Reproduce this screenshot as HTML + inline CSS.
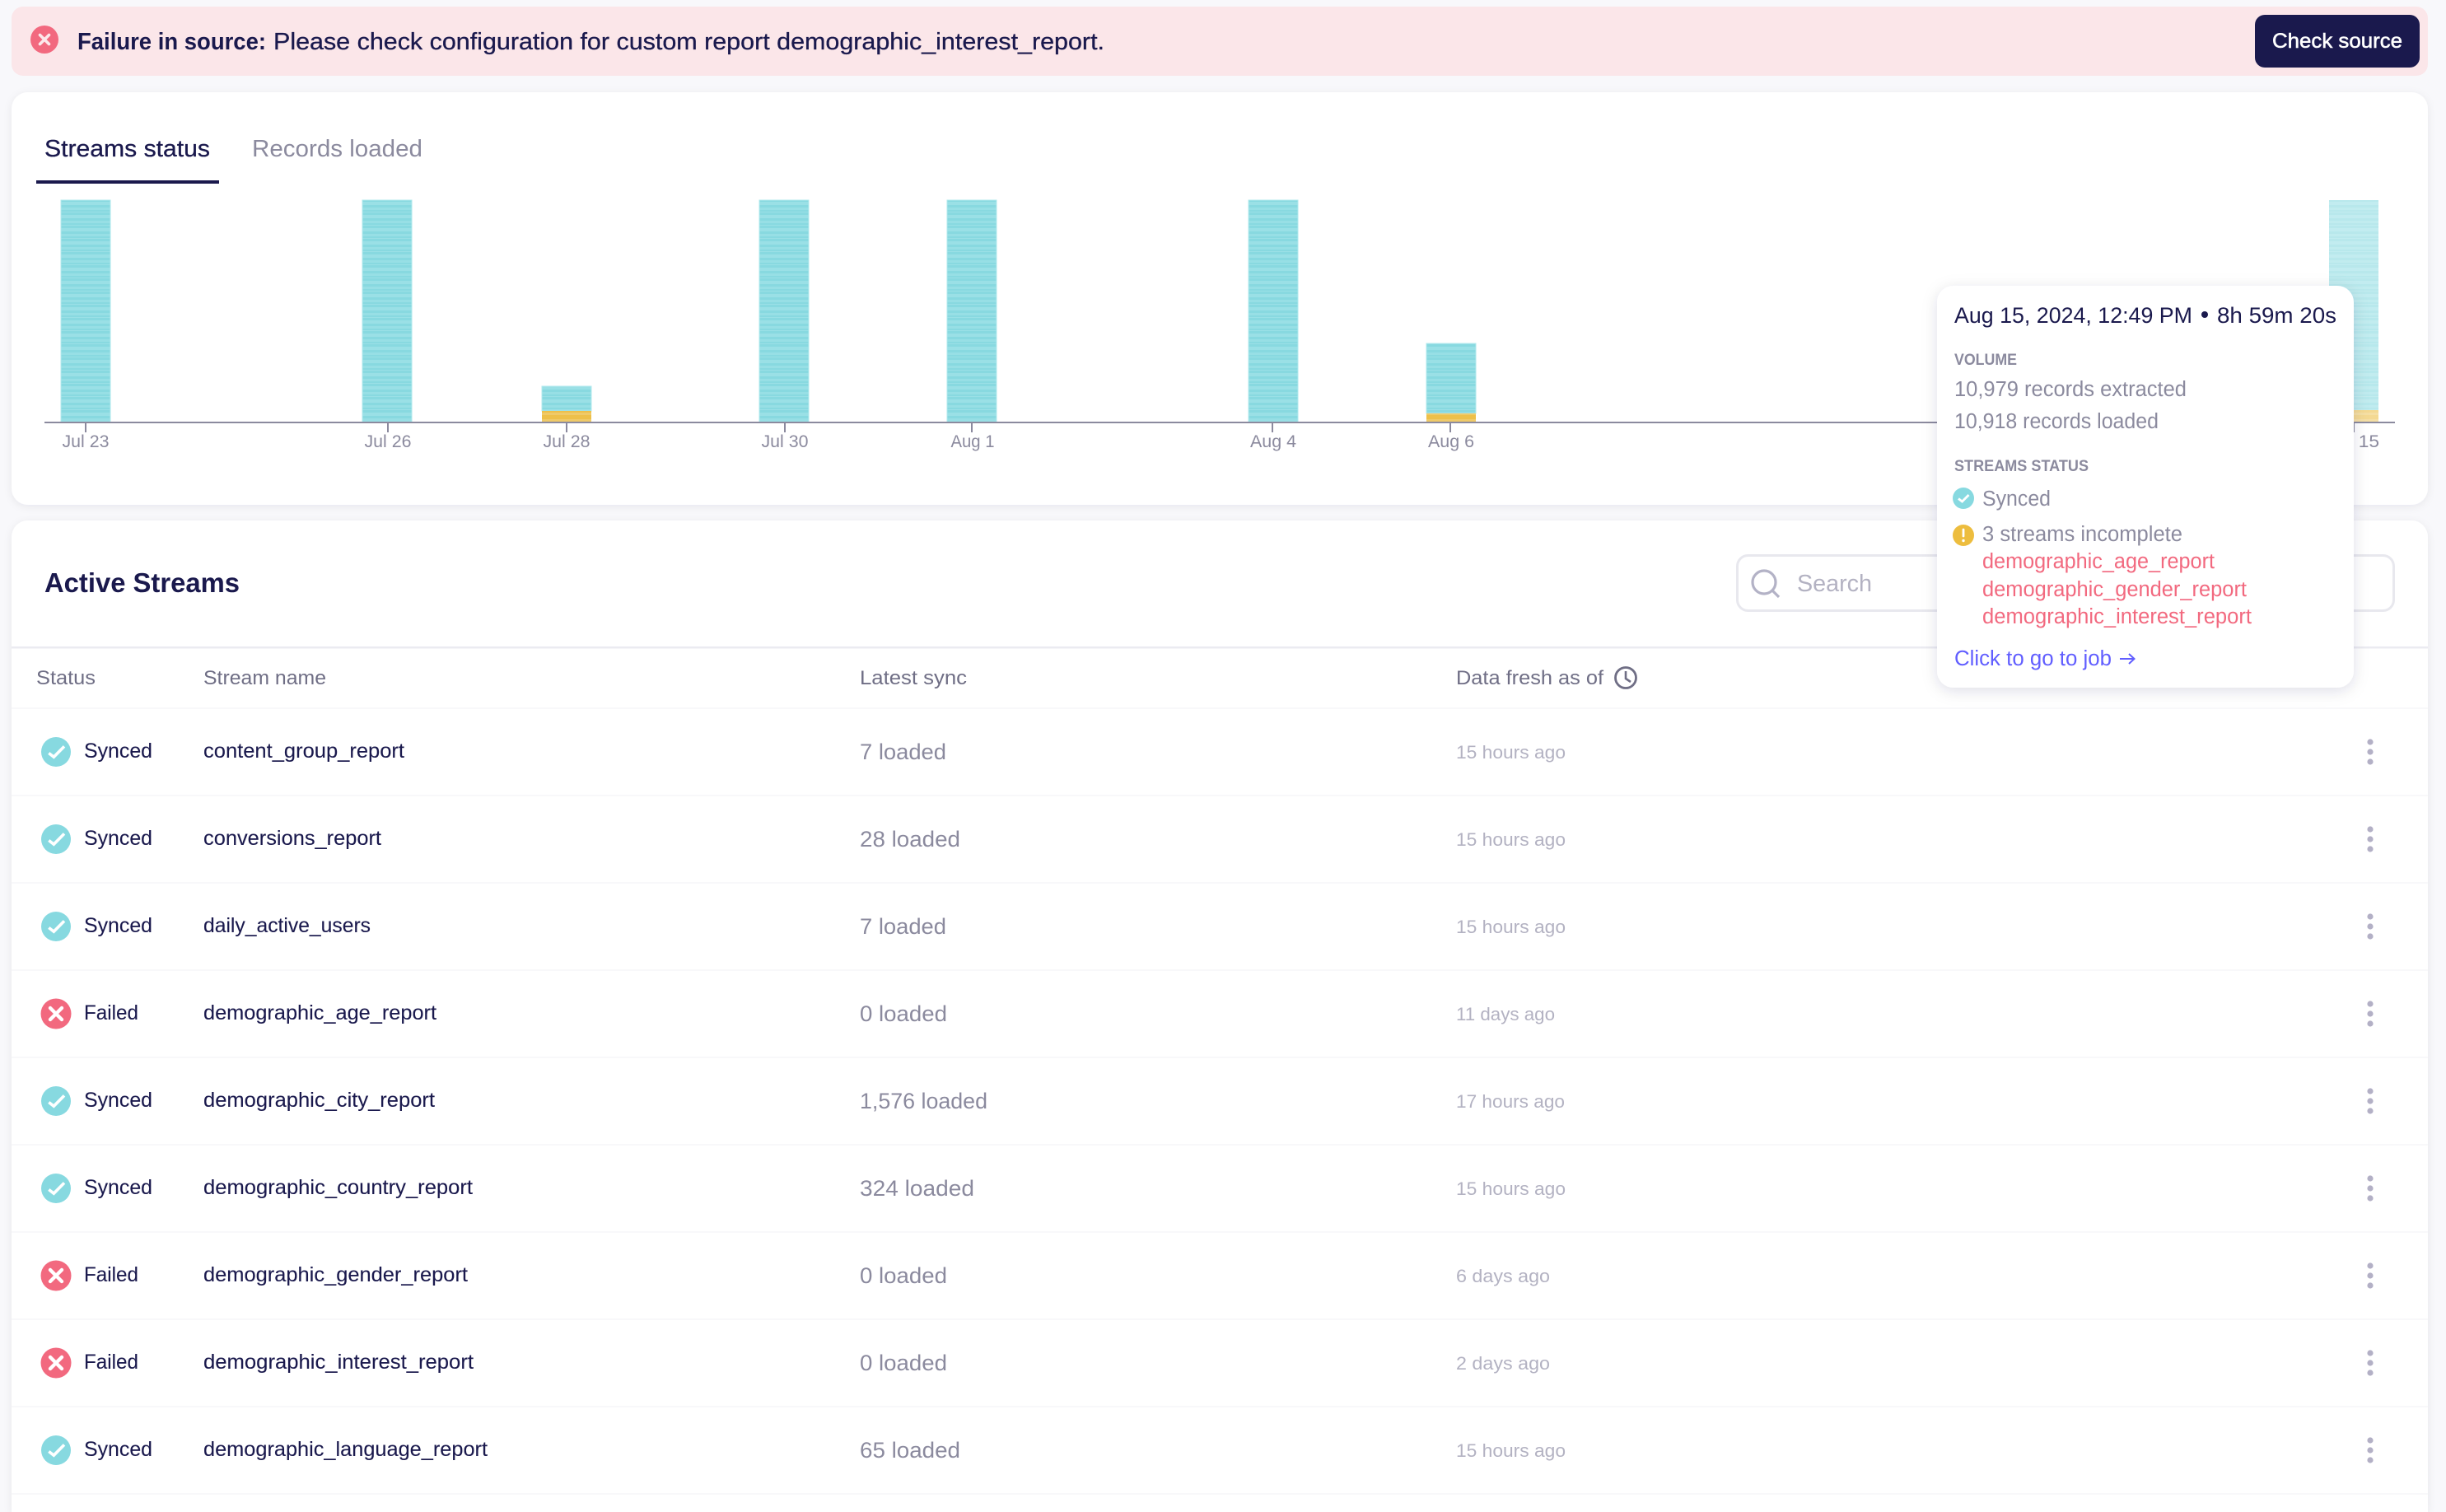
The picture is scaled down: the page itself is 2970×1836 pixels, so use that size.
<!DOCTYPE html>
<html lang="en">
<head>
<meta charset="utf-8">
<title>Streams status</title>
<style>
html,body{margin:0;padding:0;background:#f8f8fb;width:2970px;height:1836px;overflow:hidden}
svg{display:block}
text{font-family:"Liberation Sans",sans-serif;white-space:pre}
.d{fill:#1a194d}
.g{fill:#8b8a9e}
.l{fill:#b3b2c2}
.h{fill:#6f6e85;font-size:24px}
.n{fill:#1a194d;font-size:25px;stroke:#1a194d;stroke-width:.1px;transform:translate(-1px,-1px)}
.v{fill:#8b8a9e;font-size:26.5px}
.f{fill:#b3b2c2;font-size:22.5px}
.t{fill:#8b8a9e;font-size:21px;text-anchor:middle}
.c{fill:#8b8a9e;font-size:19px;font-weight:700;stroke:none}
.r{fill:#f2697f;font-size:25.5px}
.b{stroke:#b2e9ed;stroke-width:1}
</style>
</head>
<body>
<svg width="2970" height="1836" viewBox="0 0 2970 1836" xmlns="http://www.w3.org/2000/svg">
<defs>
<pattern id="st" width="10" height="16" patternUnits="userSpaceOnUse" y="243">
<rect width="10" height="16" fill="#88d9e0"/><rect y="2" width="10" height="4" fill="#9ae0e6"/><rect y="9" width="10" height="3" fill="#97dfe5"/><rect y="14" width="10" height="1" fill="#9ae0e6"/>
</pattern>
<pattern id="ye" width="10" height="8" patternUnits="userSpaceOnUse" y="498">
<rect width="10" height="8" fill="#edc04a"/><rect y="3" width="10" height="3" fill="#efca69"/>
</pattern>
<filter id="sc" x="-3%" y="-10%" width="106%" height="120%"><feDropShadow dx="0" dy="2" stdDeviation="5" flood-color="#1a194d" flood-opacity=".07"/></filter>
<filter id="st2" x="-15%" y="-10%" width="130%" height="120%"><feDropShadow dx="0" dy="4" stdDeviation="9" flood-color="#1a194d" flood-opacity=".13"/></filter>
<g id="ok"><circle r="18" fill="#87d9e0"/><path d="M-8.7 1.5 L-2.7 6.2 L10 -6.6" fill="none" stroke="#fff" stroke-width="3.6"/></g>
<g id="no"><circle r="18.5" fill="#f2697f"/><path d="M-7 -7 L7 7 M7 -7 L-7 7" fill="none" stroke="#fff" stroke-width="4.4" stroke-linecap="round"/></g>
<g id="dots" fill="#b3b0c6"><circle cy="-12" r="3.6"/><circle r="3.6"/><circle cy="12" r="3.6"/></g>
</defs>

<rect width="2970" height="1836" fill="#f8f8fb"/>

<!-- Banner -->
<rect x="14" y="8" width="2934" height="84" rx="14" fill="#fbe6e9"/>
<circle cx="54" cy="48" r="17" fill="#f2697f"/>
<path d="M48.5 42.500 L59.500 53.500 M59.500 42.500 L48.500 53.500" stroke="#fce8eb" stroke-width="3.6" stroke-linecap="round" fill="none"/>
<text x="94" y="60" font-size="29" font-weight="700" class="d" textLength="229" lengthAdjust="spacingAndGlyphs">Failure in source:</text>
<text x="332" y="60" font-size="29" class="d" stroke="#1a194d" stroke-width=".3" textLength="1009" lengthAdjust="spacingAndGlyphs">Please check configuration for custom report demographic_interest_report.</text>
<rect x="2738" y="18" width="200" height="64" rx="12" fill="#1a194d"/>
<text x="2759" y="58" font-size="25" fill="#fff" stroke="#fff" stroke-width=".55" textLength="158" lengthAdjust="spacingAndGlyphs">Check source</text>

<!-- Chart card -->
<rect x="14" y="112" width="2934" height="501" rx="20" fill="#fff" filter="url(#sc)"/>
<text x="54" y="190" font-size="29" class="d" stroke="#1a194d" stroke-width=".3" textLength="201" lengthAdjust="spacingAndGlyphs">Streams status</text>
<text x="306" y="190" font-size="29" class="g" textLength="207" lengthAdjust="spacingAndGlyphs">Records loaded</text>
<rect x="44" y="219" width="222" height="4" fill="#1a194d"/>

<rect class="b" x="74" y="243" width="60" height="269" fill="url(#st)"/>
<rect class="b" x="440" y="243" width="60" height="269" fill="url(#st)"/>
<rect class="b" x="658" y="469" width="60" height="30" fill="url(#st)"/>
<rect x="658" y="499" width="60" height="13" fill="url(#ye)"/>
<rect class="b" x="922" y="243" width="60" height="269" fill="url(#st)"/>
<rect class="b" x="1150" y="243" width="60" height="269" fill="url(#st)"/>
<rect class="b" x="1516" y="243" width="60" height="269" fill="url(#st)"/>
<rect class="b" x="1732" y="417" width="60" height="85" fill="url(#st)"/>
<rect x="1732" y="502" width="60" height="10" fill="url(#ye)"/>
<g opacity=".6">
<rect x="2828" y="243" width="60" height="255" fill="url(#st)"/>
<rect x="2828" y="498" width="60" height="14" fill="url(#ye)"/>
</g>

<rect x="54" y="512" width="2854" height="2" fill="#8b8a9e"/>
<g fill="#8b8a9e">
<rect x="103" y="514" width="2" height="11"/><rect x="470" y="514" width="2" height="11"/><rect x="687" y="514" width="2" height="11"/><rect x="952" y="514" width="2" height="11"/><rect x="1179" y="514" width="2" height="11"/><rect x="1544" y="514" width="2" height="11"/><rect x="1760" y="514" width="2" height="11"/><rect x="2857" y="514" width="2" height="11"/>
</g>
<text x="104" y="543" class="t" textLength="57" lengthAdjust="spacingAndGlyphs">Jul 23</text>
<text x="471" y="543" class="t" textLength="57" lengthAdjust="spacingAndGlyphs">Jul 26</text>
<text x="688" y="543" class="t" textLength="57" lengthAdjust="spacingAndGlyphs">Jul 28</text>
<text x="953" y="543" class="t" textLength="57" lengthAdjust="spacingAndGlyphs">Jul 30</text>
<text x="1181" y="543" class="t" textLength="53" lengthAdjust="spacingAndGlyphs">Aug 1</text>
<text x="1546" y="543" class="t" textLength="56" lengthAdjust="spacingAndGlyphs">Aug 4</text>
<text x="1762" y="543" class="t" textLength="56" lengthAdjust="spacingAndGlyphs">Aug 6</text>
<text x="2853" y="543" class="t" textLength="72" lengthAdjust="spacingAndGlyphs">Aug 15</text>

<!-- Active streams card -->
<path d="M14 1836 V652 a20 20 0 0 1 20 -20 H2928 a20 20 0 0 1 20 20 V1836 Z" fill="#fff" filter="url(#sc)"/>
<text x="54" y="719" font-size="33" font-weight="700" class="d" textLength="237" lengthAdjust="spacingAndGlyphs">Active Streams</text>

<rect x="2109.500" y="674.500" width="797" height="67" rx="13" fill="#fff" stroke="#e8e8ee" stroke-width="3"/>
<circle cx="2142" cy="707" r="14" fill="none" stroke="#b3b2c6" stroke-width="3.2"/>
<path d="M2152 717 L2160 725" stroke="#b3b2c6" stroke-width="3.2" fill="none"/>
<text x="2182" y="718" font-size="29" class="l" textLength="91" lengthAdjust="spacingAndGlyphs">Search</text>

<rect x="14" y="785" width="2934" height="2.500" fill="#ebebf1"/>
<text x="44" y="831" class="h" textLength="72" lengthAdjust="spacingAndGlyphs">Status</text>
<text x="247" y="831" class="h" textLength="149" lengthAdjust="spacingAndGlyphs">Stream name</text>
<text x="1044" y="831" class="h" textLength="130" lengthAdjust="spacingAndGlyphs">Latest sync</text>
<text x="1768" y="831" class="h" textLength="179" lengthAdjust="spacingAndGlyphs">Data fresh as of</text>
<circle cx="1974" cy="823" r="12.500" fill="none" stroke="#6f6e85" stroke-width="2.800"/>
<path d="M1974 815 V824 L1980 828" fill="none" stroke="#6f6e85" stroke-width="2.600"/>

<g fill="#f8f8fa">
<rect x="14" y="859" width="2934" height="2"/>
<rect x="14" y="965" width="2934" height="2"/>
<rect x="14" y="1071" width="2934" height="2"/>
<rect x="14" y="1177" width="2934" height="2"/>
<rect x="14" y="1283" width="2934" height="2"/>
<rect x="14" y="1389" width="2934" height="2"/>
<rect x="14" y="1495" width="2934" height="2"/>
<rect x="14" y="1601" width="2934" height="2"/>
<rect x="14" y="1707" width="2934" height="2"/>
<rect x="14" y="1813" width="2934" height="2"/>
</g>

<!-- Rows -->
<use href="#ok" x="68" y="913"/><text x="103" y="921" class="n" textLength="83" lengthAdjust="spacingAndGlyphs">Synced</text><text x="248" y="921" class="n" textLength="244" lengthAdjust="spacingAndGlyphs">content_group_report</text><text x="1044" y="922" class="v" textLength="105" lengthAdjust="spacingAndGlyphs">7 loaded</text><text x="1768" y="921" class="f" textLength="133" lengthAdjust="spacingAndGlyphs">15 hours ago</text><use href="#dots" x="2878" y="913"/>

<use href="#ok" x="68" y="1019"/><text x="103" y="1027" class="n" textLength="83" lengthAdjust="spacingAndGlyphs">Synced</text><text x="248" y="1027" class="n" textLength="216" lengthAdjust="spacingAndGlyphs">conversions_report</text><text x="1044" y="1028" class="v" textLength="122" lengthAdjust="spacingAndGlyphs">28 loaded</text><text x="1768" y="1027" class="f" textLength="133" lengthAdjust="spacingAndGlyphs">15 hours ago</text><use href="#dots" x="2878" y="1019"/>

<use href="#ok" x="68" y="1125"/><text x="103" y="1133" class="n" textLength="83" lengthAdjust="spacingAndGlyphs">Synced</text><text x="248" y="1133" class="n" textLength="203" lengthAdjust="spacingAndGlyphs">daily_active_users</text><text x="1044" y="1134" class="v" textLength="105" lengthAdjust="spacingAndGlyphs">7 loaded</text><text x="1768" y="1133" class="f" textLength="133" lengthAdjust="spacingAndGlyphs">15 hours ago</text><use href="#dots" x="2878" y="1125"/>

<use href="#no" x="68" y="1231"/><text x="103" y="1239" class="n" textLength="66" lengthAdjust="spacingAndGlyphs">Failed</text><text x="248" y="1239" class="n" textLength="283" lengthAdjust="spacingAndGlyphs">demographic_age_report</text><text x="1044" y="1240" class="v" textLength="106" lengthAdjust="spacingAndGlyphs">0 loaded</text><text x="1768" y="1239" class="f" textLength="120" lengthAdjust="spacingAndGlyphs">11 days ago</text><use href="#dots" x="2878" y="1231"/>

<use href="#ok" x="68" y="1337"/><text x="103" y="1345" class="n" textLength="83" lengthAdjust="spacingAndGlyphs">Synced</text><text x="248" y="1345" class="n" textLength="281" lengthAdjust="spacingAndGlyphs">demographic_city_report</text><text x="1044" y="1346" class="v" textLength="155" lengthAdjust="spacingAndGlyphs">1,576 loaded</text><text x="1768" y="1345" class="f" textLength="132" lengthAdjust="spacingAndGlyphs">17 hours ago</text><use href="#dots" x="2878" y="1337"/>

<use href="#ok" x="68" y="1443"/><text x="103" y="1451" class="n" textLength="83" lengthAdjust="spacingAndGlyphs">Synced</text><text x="248" y="1451" class="n" textLength="327" lengthAdjust="spacingAndGlyphs">demographic_country_report</text><text x="1044" y="1452" class="v" textLength="139" lengthAdjust="spacingAndGlyphs">324 loaded</text><text x="1768" y="1451" class="f" textLength="133" lengthAdjust="spacingAndGlyphs">15 hours ago</text><use href="#dots" x="2878" y="1443"/>

<use href="#no" x="68" y="1549"/><text x="103" y="1557" class="n" textLength="66" lengthAdjust="spacingAndGlyphs">Failed</text><text x="248" y="1557" class="n" textLength="321" lengthAdjust="spacingAndGlyphs">demographic_gender_report</text><text x="1044" y="1558" class="v" textLength="106" lengthAdjust="spacingAndGlyphs">0 loaded</text><text x="1768" y="1557" class="f" textLength="114" lengthAdjust="spacingAndGlyphs">6 days ago</text><use href="#dots" x="2878" y="1549"/>

<use href="#no" x="68" y="1655"/><text x="103" y="1663" class="n" textLength="66" lengthAdjust="spacingAndGlyphs">Failed</text><text x="248" y="1663" class="n" textLength="328" lengthAdjust="spacingAndGlyphs">demographic_interest_report</text><text x="1044" y="1664" class="v" textLength="106" lengthAdjust="spacingAndGlyphs">0 loaded</text><text x="1768" y="1663" class="f" textLength="114" lengthAdjust="spacingAndGlyphs">2 days ago</text><use href="#dots" x="2878" y="1655"/>

<use href="#ok" x="68" y="1761"/><text x="103" y="1769" class="n" textLength="83" lengthAdjust="spacingAndGlyphs">Synced</text><text x="248" y="1769" class="n" textLength="345" lengthAdjust="spacingAndGlyphs">demographic_language_report</text><text x="1044" y="1770" class="v" textLength="122" lengthAdjust="spacingAndGlyphs">65 loaded</text><text x="1768" y="1769" class="f" textLength="133" lengthAdjust="spacingAndGlyphs">15 hours ago</text><use href="#dots" x="2878" y="1761"/>

<!-- Tooltip -->
<rect x="2352" y="347" width="506" height="488" rx="20" fill="#fff" filter="url(#st2)"/>
<text x="2373" y="392" font-size="27" class="d" textLength="289" lengthAdjust="spacingAndGlyphs">Aug 15, 2024, 12:49 PM</text>
<circle cx="2677" cy="382" r="4" fill="#1a194d"/>
<text x="2692" y="392" font-size="27" class="d" textLength="145" lengthAdjust="spacingAndGlyphs">8h 59m 20s</text>
<text x="2373" y="443" class="c" textLength="76" lengthAdjust="spacingAndGlyphs">VOLUME</text>
<text x="2373" y="481" font-size="25.500" class="g" textLength="282" lengthAdjust="spacingAndGlyphs">10,979 records extracted</text>
<text x="2373" y="520" font-size="25.500" class="g" textLength="248" lengthAdjust="spacingAndGlyphs">10,918 records loaded</text>
<text x="2373" y="572" class="c" textLength="163" lengthAdjust="spacingAndGlyphs">STREAMS STATUS</text>
<circle cx="2384" cy="605" r="13" fill="#87d9e0"/>
<path d="M2378 605.500 L2382.500 609 L2390.500 601" fill="none" stroke="#fff" stroke-width="2.800"/>
<text x="2407" y="614" font-size="25.500" class="g" textLength="83" lengthAdjust="spacingAndGlyphs">Synced</text>
<circle cx="2384" cy="650" r="13" fill="#edbd3e"/>
<path d="M2384 643 V651" stroke="#fff" stroke-width="2.800" stroke-linecap="round"/>
<circle cx="2384" cy="656.500" r="1.700" fill="#fff"/>
<text x="2407" y="657" font-size="25.500" class="g" textLength="243" lengthAdjust="spacingAndGlyphs">3 streams incomplete</text>
<text x="2407" y="690" class="r" textLength="282" lengthAdjust="spacingAndGlyphs">demographic_age_report</text>
<text x="2407" y="724" class="r" textLength="321" lengthAdjust="spacingAndGlyphs">demographic_gender_report</text>
<text x="2407" y="757" class="r" textLength="327" lengthAdjust="spacingAndGlyphs">demographic_interest_report</text>
<text x="2373" y="808" font-size="25.500" fill="#615eff" textLength="191" lengthAdjust="spacingAndGlyphs">Click to go to job</text>
<path d="M2574 800 H2591 M2585 794 L2591.500 800 L2585 806" fill="none" stroke="#615eff" stroke-width="2"/>
</svg>
</body>
</html>
